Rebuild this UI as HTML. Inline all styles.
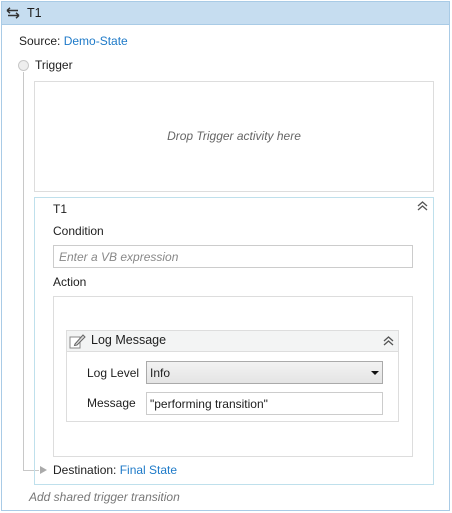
<!DOCTYPE html>
<html><head><meta charset="utf-8"><style>
*{box-sizing:border-box;margin:0;padding:0}
body{width:452px;height:513px;background:#fff;font-family:"Liberation Sans",sans-serif;font-size:12px;color:#1e1e1e;position:relative;overflow:hidden}
.a{position:absolute}
.lnk{color:#1e7ac8}
</style></head><body>
<div class="a" style="left:1px;top:1px;width:449px;height:510px;border:1px solid #a9cbe6"></div>
<div class="a" style="left:1px;top:1px;width:449px;height:24px;background:#c6ddf0;border:1px solid #a9cbe6"></div>
<svg class="a" style="left:6px;top:7px" width="14" height="12" viewBox="0 0 14 12"><path d="M1 3.5H12M1 3.5L4 0.8M1 3.5L4 6.2M13 8.5H2M13 8.5L10 5.8M13 8.5L10 11.2" stroke="#333" stroke-width="1.4" fill="none"/></svg>
<div class="a" style="left:27px;top:6px;font-size:12.5px">T1</div>
<div class="a" style="left:19px;top:34px">Source: <span class="lnk">Demo-State</span></div>
<div class="a" style="left:18px;top:60px;width:11px;height:11px;border-radius:50%;border:1px solid #c8c8c8;background:#eee"></div>
<div class="a" style="left:35px;top:58px">Trigger</div>
<div class="a" style="left:23px;top:72px;width:1px;height:398px;background:#c8c8c8"></div>
<div class="a" style="left:23px;top:470px;width:16px;height:1px;background:#c8c8c8"></div>
<div class="a" style="left:40px;top:466px;width:0;height:0;border-left:7px solid #aaa;border-top:4px solid transparent;border-bottom:4px solid transparent"></div>
<div class="a" style="left:34px;top:81px;width:400px;height:111px;border:1px solid #ddd"></div>
<div class="a" style="left:34px;top:129px;width:400px;text-align:center;font-style:italic;color:#666">Drop Trigger activity here</div>
<div class="a" style="left:34px;top:197px;width:400px;height:288px;border:1px solid #bfe0ec"></div>
<div class="a" style="left:53px;top:202px">T1</div>
<svg class="a" style="left:417px;top:201px" width="11" height="10" viewBox="0 0 11 10"><path d="M1 5L5.5 1L10 5M1 9L5.5 5L10 9" stroke="#555" stroke-width="1.3" fill="none"/></svg>
<div class="a" style="left:53px;top:224px">Condition</div>
<div class="a" style="left:53px;top:245px;width:360px;height:23px;border:1px solid #ccc"></div>
<div class="a" style="left:59px;top:250px;font-style:italic;color:#888">Enter a VB expression</div>
<div class="a" style="left:53px;top:275px">Action</div>
<div class="a" style="left:53px;top:296px;width:360px;height:161px;border:1px solid #ddd"></div>
<div class="a" style="left:66px;top:330px;width:333px;height:92px;border:1px solid #ddd"></div>
<div class="a" style="left:67px;top:331px;width:331px;height:21px;background:#f3f4f4;border-bottom:1px solid #ddd"></div>
<svg class="a" style="left:69px;top:333px" width="17" height="16" viewBox="0 0 17 16"><rect x="1" y="4" width="10" height="11" fill="#fff" stroke="#888"/><path d="M6 11L14 2L16 4L8 12L5.5 12.5Z" fill="#ddd" stroke="#666"/></svg>
<div class="a" style="left:91px;top:333px;font-size:12.5px">Log Message</div>
<svg class="a" style="left:383px;top:336px" width="11" height="10" viewBox="0 0 11 10"><path d="M1 5L5.5 1L10 5M1 9L5.5 5L10 9" stroke="#555" stroke-width="1.3" fill="none"/></svg>
<div class="a" style="left:87px;top:366px">Log Level</div>
<div class="a" style="left:146px;top:361px;width:237px;height:23px;border:1px solid #aaa;background:linear-gradient(#f2f2f2,#e4e4e4)"></div>
<div class="a" style="left:150px;top:366px">Info</div>
<div class="a" style="left:371px;top:371px;width:0;height:0;border-top:4px solid #111;border-left:4px solid transparent;border-right:4px solid transparent"></div>
<div class="a" style="left:87px;top:396px">Message</div>
<div class="a" style="left:146px;top:392px;width:237px;height:23px;border:1px solid #ccc"></div>
<div class="a" style="left:150px;top:397px">"performing transition"</div>
<div class="a" style="left:53px;top:463px">Destination: <span class="lnk">Final State</span></div>
<div class="a" style="left:29px;top:490px;font-style:italic;color:#777">Add shared trigger transition</div>
</body></html>
